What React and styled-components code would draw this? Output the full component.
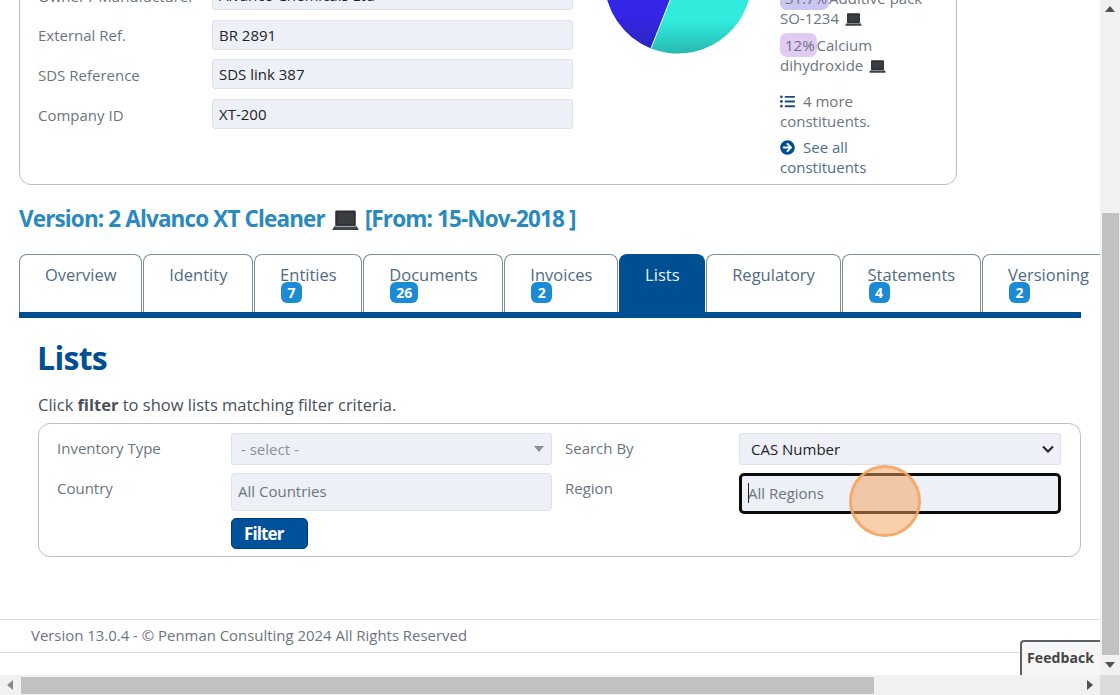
import React from 'react';
import styled, { createGlobalStyle } from 'styled-components';
import { FaListUl, FaArrowCircleRight } from 'react-icons/fa';

const Global = createGlobalStyle`
  html, body { margin: 0; padding: 0; height: 100%; overflow: hidden; background: #fff; }
  body { font-family: "Open Sans", "Noto Sans", sans-serif; font-size: 15px; color: #212529; }
  * { box-sizing: border-box; }
`;

const Frame = styled.div`
  width: 1120px; height: 695px; display: grid;
  grid-template-columns: 1100px 20px; grid-template-rows: 675px 20px;
`;
const Main = styled.main`position: relative; overflow: hidden; background: #fff;`;
const Upper = styled.div`width: 1081px; padding-left: 19px; margin-top: -100px;`;

const Card = styled.section`
  width: 938px; height: 285px; display: flex; padding: 0 18px;
  border: 1px solid #b9bfc4; border-radius: 12px;
`;
const Fields = styled.div`width: 535px; margin-top: 78.6px; display: flex; flex-direction: column; gap: 9.67px; flex: none;`;
const FieldRow = styled.div`display: grid; grid-template-columns: 174px 361px; align-items: center; height: 30px;`;
const FieldLabel = styled.label`color: #6c757d; line-height: 30px; padding-top: 1px;`;
const FieldInput = styled.input`
  height: 30px; width: 100%; padding: 0 6px; font: inherit; color: #212529;
  background: #edf0f6; border: 1px solid #dee2e6; border-radius: 3px; outline: none;
`;
const PieBox = styled.div`margin: 5px 0 0 31px; flex: none; line-height: 0;`;
const Constituents = styled.div`
  margin-left: 28px; width: 158px; align-self: flex-end; padding-bottom: 7px;
  color: #6c757d; line-height: 20px;
`;
const Item = styled.div`margin-bottom: 7px;`;
const Pct = styled.span`
  padding: 2px 2px 2px 5px; border-radius: 7px; background: ${p => p.$bg};
`;
const More = styled.div`margin-top: 16px;`;
const SeeAll = styled.div`margin-top: 6px; color: #4b6f8c;`;
const IconGap = styled.span`
  display: inline-flex; vertical-align: -2px; margin-right: 8px; color: ${p => p.$color}; font-size: 15px;
`;
const Laptop = styled.svg`vertical-align: ${p => p.$drop}; margin: 0 ${p => p.$after} 0 ${p => p.$gap};`;

const Title = styled.h2`
  margin: 19px 0 0; font-size: 22.5px; line-height: 30px; font-weight: 700; letter-spacing: -0.87px; color: #2a89bd;
`;
const Tabs = styled.nav`
  margin-top: 20px; width: 1062px; height: 64px; display: flex; gap: 1px; border-bottom: 6px solid #004f92;
`;
const Tab = styled.div`
  flex: none; height: 58px; padding: 8px 24.8px 0 24.9px; font-size: 16.5px; line-height: 24px;
  border: 1px solid #7d8f98; border-bottom: none; border-radius: 8px 8px 0 0;
  color: ${p => (p.$active ? '#e8f1f8' : '#4f6b84')};
  background: ${p => (p.$active ? '#004f92' : '#fff')};
  border-color: ${p => (p.$active ? '#004f92' : '#7d8f98')};
`;
const Badge = styled.div`
  width: fit-content; min-width: 21px; height: 21px; margin-top: -5px; padding: 0 6px; margin-left: 1px;
  border-radius: 6px; background: #1b8cd3; color: #fff; font-size: 14px; font-weight: 700;
  line-height: 21px; text-align: center;
`;
const Section = styled.div`padding-left: 19px;`;
const Heading = styled.h1`margin: 20px 0 0 -1px; font-size: 32px; line-height: 40px; font-weight: 700; letter-spacing: -0.7px; color: #004f92;`;
const Intro = styled.p`margin: 15px 0 0; font-size: 16.5px; line-height: 24px; color: #495057;`;
const FilterBox = styled.div`
  margin-top: 6px; width: 1043px; height: 134px; padding: 9px 19px 0 18px;
  border: 1px solid #b9bfc4; border-radius: 12px; display: flex; gap: 13px;
`;
const FilterCol = styled.div`flex: none; width: ${p => p.$w}px; display: flex; flex-direction: column; gap: 8px;`;
const FilterRow = styled.div`display: grid; grid-template-columns: 174px 1fr; align-items: start;`;
const FilterLabel = styled.label`line-height: 30px; color: #6c757d;`;
const SelectBox = styled.div`
  height: 32px; display: flex; align-items: center; justify-content: space-between;
  border: 1px solid #dee2e6; border-radius: 3px; background: #edf0f6;
  padding: ${p => (p.$native ? '0 5px 1px 11px' : '0 7px 1px 9px')};
  color: ${p => (p.$native ? '#212529' : '#8a9299')};
`;
const RegionInput = styled.input`
  width: 100%; height: 38px; padding: 0 6px 2px; font: inherit; background: #edf0f6;
  border: 1px solid #dee2e6; border-radius: 4px; outline: none;
  &::placeholder { color: #6c757d; opacity: 1; }
`;
const FocusWrap = styled.div`
  position: relative;
  &::before { content: ""; position: absolute; left: 9px; top: 10px; width: 1px; height: 20px; background: #222; }
`;
const FocusInput = styled(RegionInput)`height: 41px; border: 3px solid #0b0b0b; border-radius: 5px;`;
const FilterButton = styled.button`
  grid-column: 2; width: 77px; height: 31px; margin-top: -1px; padding: 0 0 0 12px; text-align: left;
  font: 700 17px "Open Sans", sans-serif; letter-spacing: -0.9px; color: #fff;
  background: #00509a; border: 1px solid #003e78; border-radius: 5px;
`;
const Footer = styled.footer`
  margin-top: 62px; height: 34px; padding-left: 31px; font-size: 14.93px; line-height: 30px;
  border-top: 1px solid #dcdfe2; border-bottom: 1px solid #dcdfe2; color: #6c757d;
`;
const Feedback = styled.div`
  position: absolute; right: 0; bottom: 0; width: 80px; height: 35px; padding: 6px 0 0 5px;
  background: #f6f6f6; border-top: 2px solid #5c6268; border-left: 2px solid #5c6268; border-radius: 4px 0 0 0;
  font-size: 14px; font-weight: 700; letter-spacing: 0.1px; color: #444; line-height: 20px;
`;
const Highlight = styled.div`
  position: absolute; left: 849px; top: 465px; width: 72px; height: 72px; border-radius: 50%;
  background: rgba(244, 160, 90, 0.5); border: 3px solid rgba(243, 165, 100, 0.85);
`;
const VBar = styled.div`background: #f1f1f1; display: flex; flex-direction: column; align-items: center;`;
const VThumb = styled.div`width: 17px; height: 442px; background: #c1c1c1; margin-top: 193px;`;
const HBar = styled.div`background: #f1f1f1; display: flex; align-items: center; justify-content: space-between;`;
const HThumb = styled.div`width: 853px; height: 17px; background: #c1c1c1; margin-left: 1px; margin-right: auto;`;
const Corner = styled.div`background: #dcdcdc;`;
const Arrow = styled.div`width: 20px; height: 20px; flex: none; display: flex; align-items: center; justify-content: center;`;

const LaptopIcon = ({ w, drop, gap, after = '0' }) => (
  <Laptop $drop={drop} $gap={gap} $after={after} width={w} height={w * 0.76} viewBox="0 0 26 20">
    <rect x="3" y="0.5" width="20" height="15" rx="1.2" fill="#2b2d30" />
    <rect x="5" y="2.5" width="16" height="11" fill="#3a3d41" />
    <path d="M3 15h20l2.6 3.2c.4.7 0 1.4-.8 1.4H1.2c-.8 0-1.2-.7-.8-1.4z" fill="#3f4246" />
    <rect x="3" y="15.5" width="20" height="1.2" fill="#9aa0a6" />
  </Laptop>
);

const Tri = ({ dir, c = '#505050' }) => {
  const pts = { up: '0,7 5,1 10,7', down: '0,2 10,2 5,8', left: '8,0 8,10 2,5', right: '2,0 2,10 8,5' }[dir];
  return <svg width="10" height="10" viewBox="0 0 10 10"><polygon points={pts} fill={c} /></svg>;
};

const Pie = () => (
  <svg width="148" height="148" viewBox="0 0 148 148">
    <defs>
      <linearGradient id="teal" x1="0" y1="0.55" x2="0" y2="1">
        <stop offset="0" stopColor="#31ecdc" />
        <stop offset="1" stopColor="#27b9b1" />
      </linearGradient>
      <linearGradient id="indigo" x1="0" y1="0.5" x2="0" y2="1">
        <stop offset="0" stopColor="#3326e6" />
        <stop offset="1" stopColor="#2c26c0" />
      </linearGradient>
    </defs>
    <path d="M74 74 L0.5 74 A73.5 73.5 0 0 0 47 142.4 Z" fill="url(#indigo)" />
    <path d="M74 74 L47 142.4 A73.5 73.5 0 0 0 147.5 74 Z" fill="url(#teal)" />
    <path d="M74 74 L47 142.4" stroke="#dff" strokeWidth="1" />
  </svg>
);

const rows = [
  ['Owner / Manufacturer', 'Alvanco Chemicals Ltd'],
  ['External Ref.', 'BR 2891'],
  ['SDS Reference', 'SDS link 387'],
  ['Company ID', 'XT-200'],
];
const tabs = [
  ['Overview'], ['Identity'], ['Entities', 7], ['Documents', 26], ['Invoices', 2],
  ['Lists', null, true], ['Regulatory'], ['Statements', 4], ['Versioning', 2],
];

export default function App() {
  return (
    <Frame>
      <Global />
      <Main>
        <Upper>
          <Card>
            <Fields>
              {rows.map(([l, v]) => (
                <FieldRow key={l}>
                  <FieldLabel>{l}</FieldLabel>
                  <FieldInput readOnly value={v} />
                </FieldRow>
              ))}
            </Fields>
            <PieBox><Pie /></PieBox>
            <Constituents>
              <Item><Pct $bg="#cbc6f4">31.7%</Pct>Additive pack SO-1234 <LaptopIcon w={17} drop="-2px" gap="2px" /></Item>
              <Item><Pct $bg="#e1caf4">12%</Pct>Calcium dihydroxide <LaptopIcon w={17} drop="-2px" gap="2px" /></Item>
              <More><IconGap $color="#1f4e79"><FaListUl /></IconGap>4 more constituents.</More>
              <SeeAll><IconGap $color="#004f92"><FaArrowCircleRight /></IconGap>See all constituents</SeeAll>
            </Constituents>
          </Card>
          <Title>Version: 2 Alvanco XT Cleaner <LaptopIcon w={27} drop="-4px" gap="2px" after="1px" /> [From: 15-Nov-2018 ]</Title>
          <Tabs>
            {tabs.map(([name, count, active]) => (
              <Tab key={name} $active={active}>
                {name}
                {count != null && <Badge>{count}</Badge>}
              </Tab>
            ))}
          </Tabs>
          <Section>
            <Heading>Lists</Heading>
            <Intro>Click <b>filter</b> to show lists matching filter criteria.</Intro>
            <FilterBox>
              <FilterCol $w={495}>
                <FilterRow>
                  <FilterLabel>Inventory Type</FilterLabel>
                  <SelectBox>- select -<Tri dir="down" c="#8a8f94" /></SelectBox>
                </FilterRow>
                <FilterRow>
                  <FilterLabel>Country</FilterLabel>
                  <RegionInput readOnly placeholder="All Countries" />
                </FilterRow>
                <FilterRow>
                  <FilterButton>Filter</FilterButton>
                </FilterRow>
              </FilterCol>
              <FilterCol $w={496}>
                <FilterRow>
                  <FilterLabel>Search By</FilterLabel>
                  <SelectBox $native>CAS Number
                    <svg width="14" height="14" viewBox="0 0 14 14"><path d="M2 4.5l5 5 5-5" fill="none" stroke="#222" strokeWidth="2" /></svg>
                  </SelectBox>
                </FilterRow>
                <FilterRow>
                  <FilterLabel>Region</FilterLabel>
                  <FocusWrap><FocusInput readOnly placeholder="All Regions" /></FocusWrap>
                </FilterRow>
              </FilterCol>
            </FilterBox>
          </Section>
        </Upper>
        <Footer>Version 13.0.4 - © Penman Consulting 2024 All Rights Reserved</Footer>
        <Highlight />
        <Feedback>Feedback</Feedback>
      </Main>
      <VBar>
        <Arrow><Tri dir="up" /></Arrow>
        <VThumb />
        <Arrow><Tri dir="down" /></Arrow>
      </VBar>
      <HBar>
        <Arrow><Tri dir="left" c="#8a8a8a" /></Arrow>
        <HThumb />
        <Arrow><Tri dir="right" /></Arrow>
      </HBar>
      <Corner />
    </Frame>
  );
}
